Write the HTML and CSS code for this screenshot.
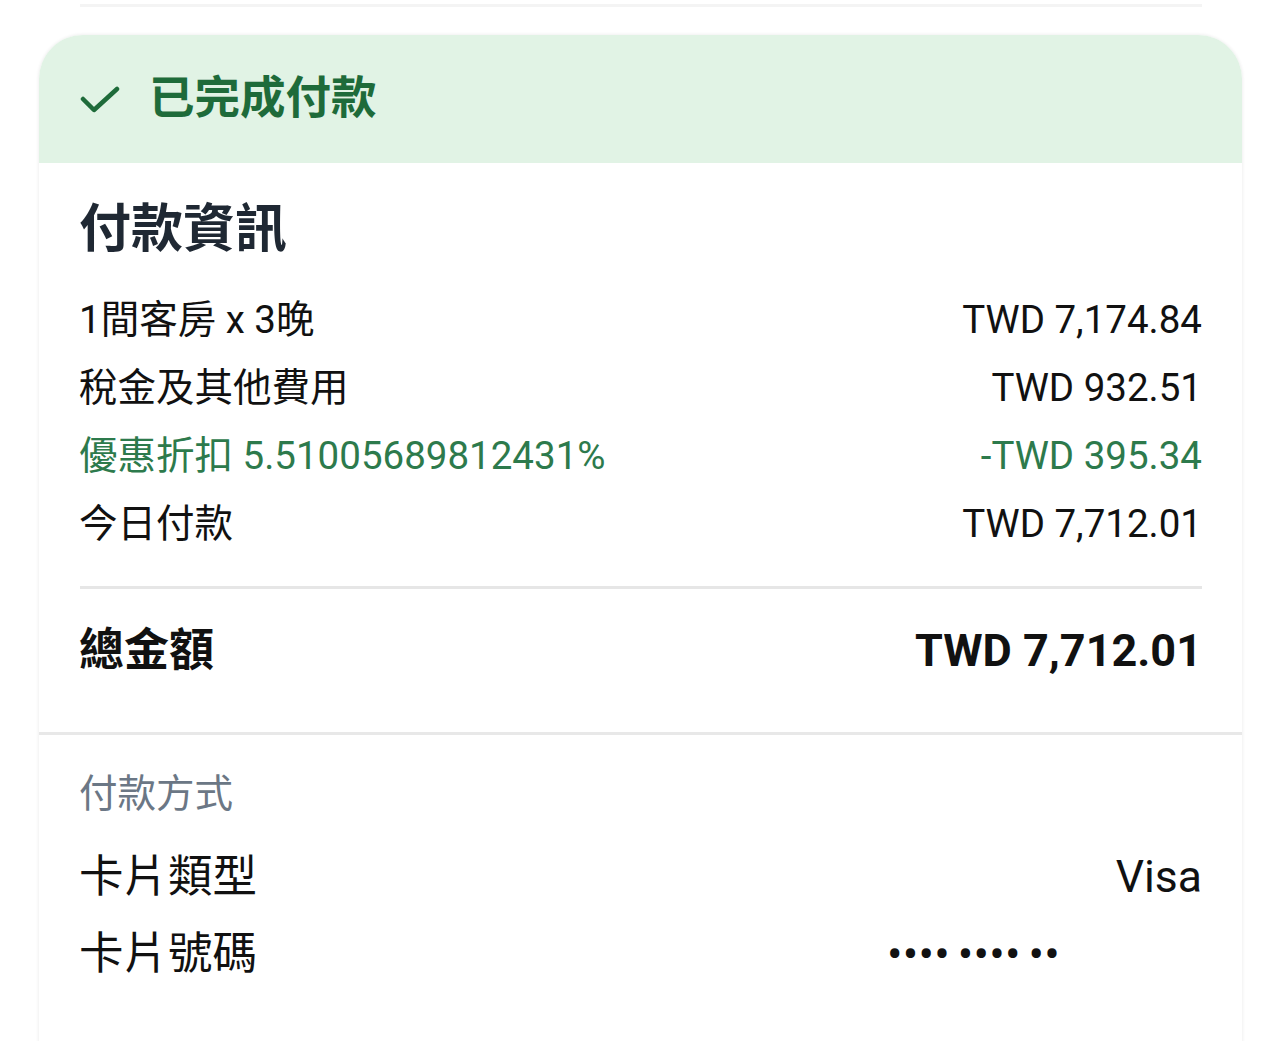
FILE: index.html
```html
<!DOCTYPE html>
<html lang="zh-Hant">
<head>
<meta charset="utf-8">
<title>付款資訊</title>
<link rel="stylesheet" href="styles.css">
</head>
<body>
<div class="page">
  <div class="prev-line"></div>
  <section class="card">
    <header class="status">
      <svg class="check" width="40" height="28" viewBox="0 0 40 28" aria-hidden="true">
        <path d="M3 13 L14 24 L37 3" fill="none" stroke="#1e6b3a" stroke-width="4.5" stroke-linecap="round" stroke-linejoin="round"/>
      </svg>
      <span class="status-text">已完成付款</span>
    </header>
    <div class="body">
      <h2 class="heading">付款資訊</h2>
      <div class="rows">
        <div class="row"><span>1間客房 x 3晚</span><span>TWD 7,174.84</span></div>
        <div class="row"><span>稅金及其他費用</span><span>TWD 932.51</span></div>
        <div class="row discount"><span>優惠折扣 5.51005689812431%</span><span>-TWD 395.34</span></div>
        <div class="row"><span>今日付款</span><span>TWD 7,712.01</span></div>
      </div>
      <div class="divider"></div>
      <div class="row total"><span>總金額</span><span>TWD 7,712.01</span></div>
    </div>
    <div class="method">
      <div class="method-label">付款方式</div>
      <div class="row card-row"><span>卡片類型</span><span>Visa</span></div>
      <div class="row card-row"><span>卡片號碼</span><span class="masked">•••• •••• ••</span></div>
    </div>
  </section>
</div>
</body>
</html>
```
FILE: styles.css
```css
html, body {
  margin: 0;
  padding: 0;
  background: #ffffff;
}
body {
  font-family: Roboto, "Noto Sans CJK TC", sans-serif;
  color: #111111;
}
.page {
  padding: 4px 38px 0 39px;
}
.prev-line {
  height: 3px;
  background: #f4f4f4;
  margin: 0 40px 0 41px;
}
.card {
  margin-top: 28px;
  border-radius: 44px 44px 0 0;
  overflow: hidden;
  background: #ffffff;
  box-shadow: 0 0 3px 1px rgba(0, 0, 0, 0.06);
  height: 1020px;
}
.status {
  height: 128px;
  background: #e1f3e5;
  display: flex;
  align-items: center;
  padding-left: 41px;
  gap: 29px;
}
.check {
  display: block;
  margin-top: 2px;
}
.status-text {
  font-size: 45.5px;
  font-weight: 700;
  color: #1e6b3a;
  line-height: 1;
}
.body {
  padding: 33px 40px 0 40px;
}
.heading {
  margin: 0;
  font-size: 52px;
  line-height: 68px;
  font-weight: 700;
  color: #1f2833;
}
.rows {
  margin-top: 22px;
}
.row {
  display: flex;
  justify-content: space-between;
  align-items: center;
  font-size: 38.5px;
  line-height: 68px;
}
.discount {
  color: #2d7a4c;
}
.divider {
  margin-top: 28px;
  margin-left: 1px;
  height: 3px;
  background: #e6e6e6;
}
.total {
  padding: 32px 0 51px;
  line-height: 60px;
  font-size: 45px;
  font-weight: 700;
}
.method {
  border-top: 3px solid #e8e8e8;
  padding: 34px 40px 0 40px;
}
.method-label {
  font-size: 38.5px;
  line-height: 50px;
  color: #6b7785;
  margin-bottom: 20px;
}
.card-row {
  font-size: 44.5px;
  line-height: 77px;
}
.masked {
  font-size: 46px;
  letter-spacing: 0.2px;
  word-spacing: -3.7px;
  margin-right: 142px;
}
```
